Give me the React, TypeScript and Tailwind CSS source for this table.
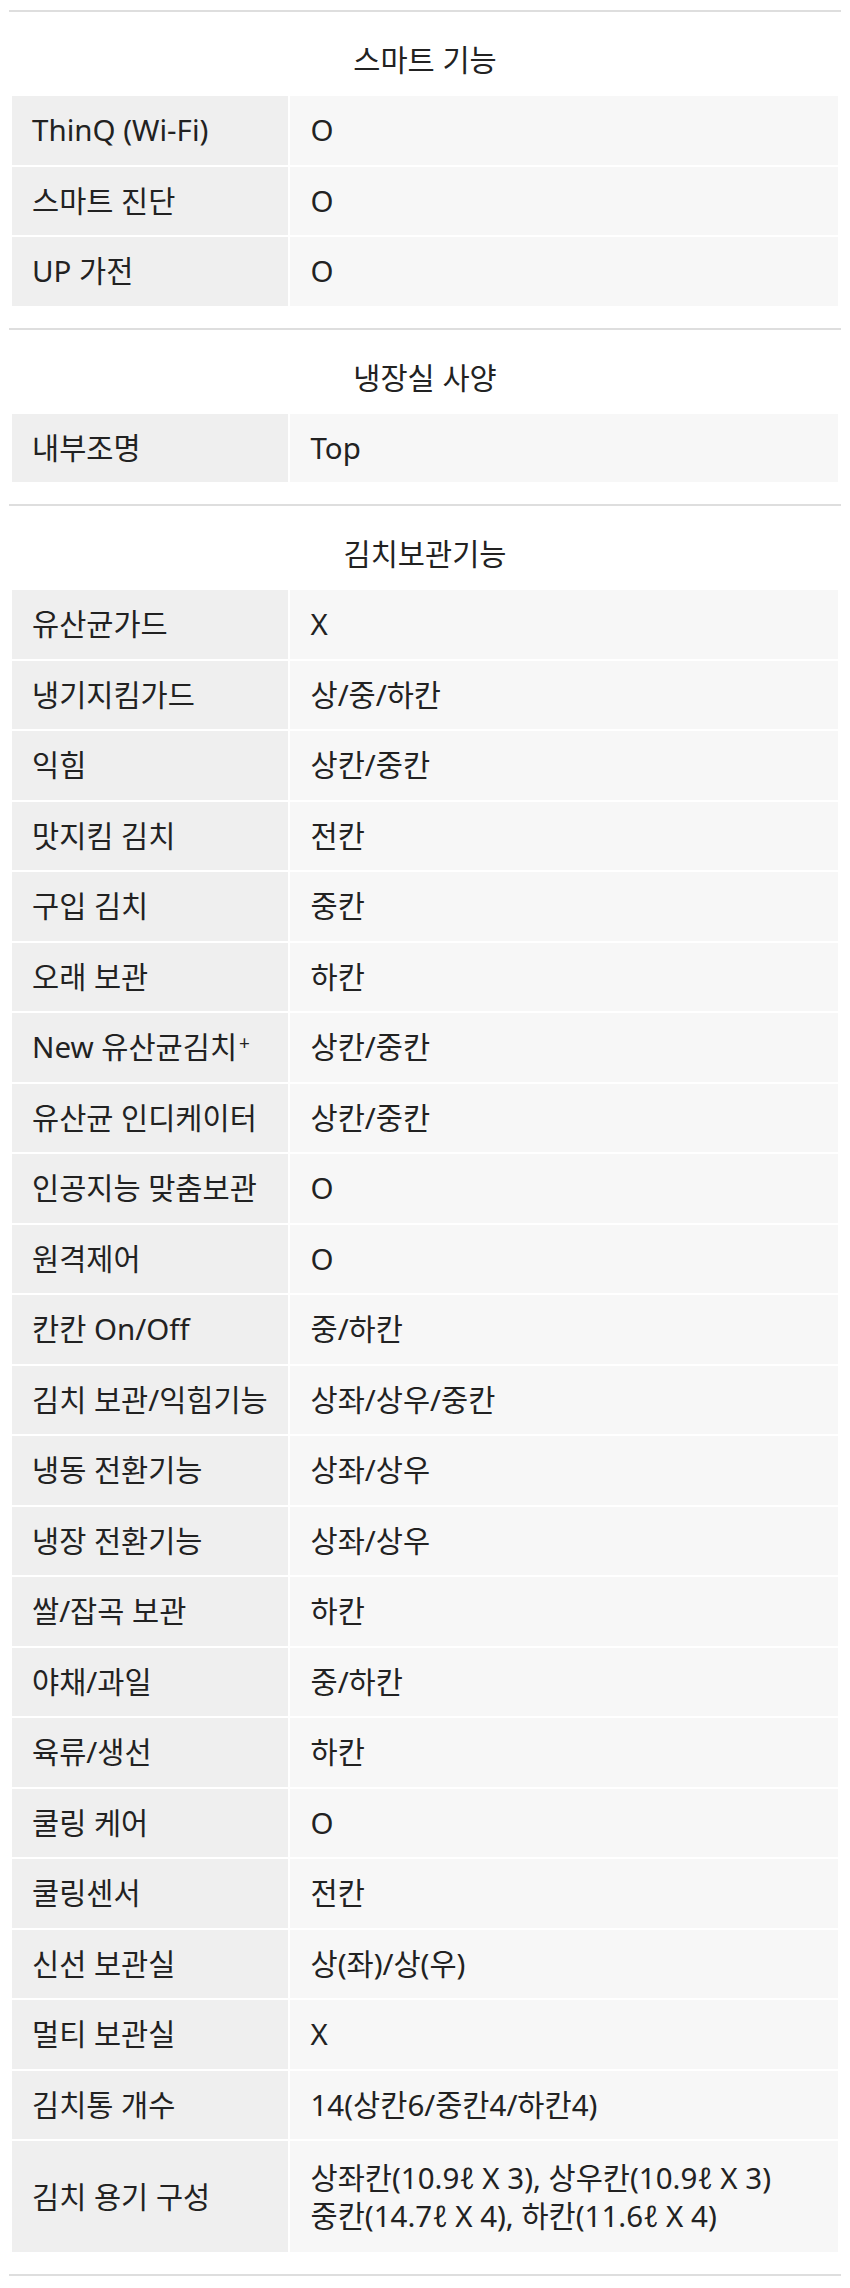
import React from "react";

type Row = { label: React.ReactNode; value: React.ReactNode; tall?: boolean };
type Section = { title: string; rows: Row[] };

const sections: Section[] = [
    {
        title: "스마트 기능",
        rows: [
            { label: "ThinQ (Wi-Fi)", value: "O" },
            { label: "스마트 진단", value: "O" },
            { label: "UP 가전", value: "O" },
        ],
    },
    {
        title: "냉장실 사양",
        rows: [{ label: "내부조명", value: "Top" }],
    },
    {
        title: "김치보관기능",
        rows: [
            { label: "유산균가드", value: "X" },
            { label: "냉기지킴가드", value: "상/중/하칸" },
            { label: "익힘", value: "상칸/중칸" },
            { label: "맛지킴 김치", value: "전칸" },
            { label: "구입 김치", value: "중칸" },
            { label: "오래 보관", value: "하칸" },
            {
                label: (
                    <>
                        New 유산균김치<sup className="text-[19px] relative -top-[4px] ml-[2px]">+</sup>
                    </>
                ),
                value: "상칸/중칸",
            },
            { label: "유산균 인디케이터", value: "상칸/중칸" },
            { label: "인공지능 맞춤보관", value: "O" },
            { label: "원격제어", value: "O" },
            { label: "칸칸 On/Off", value: "중/하칸" },
            { label: "김치 보관/익힘기능", value: "상좌/상우/중칸" },
            { label: "냉동 전환기능", value: "상좌/상우" },
            { label: "냉장 전환기능", value: "상좌/상우" },
            { label: "쌀/잡곡 보관", value: "하칸" },
            { label: "야채/과일", value: "중/하칸" },
            { label: "육류/생선", value: "하칸" },
            { label: "쿨링 케어", value: "O" },
            { label: "쿨링센서", value: "전칸" },
            { label: "신선 보관실", value: "상(좌)/상(우)" },
            { label: "멀티 보관실", value: "X" },
            { label: "김치통 개수", value: "14(상칸6/중칸4/하칸4)" },
            {
                label: "김치 용기 구성",
                value: (
                    <>
                        상좌칸(10.9ℓ X 3), 상우칸(10.9ℓ X 3)
                        <br />
                        중칸(14.7ℓ X 4), 하칸(11.6ℓ X 4)
                    </>
                ),
                tall: true,
            },
        ],
    },
];

function SpecRow({ row }: { row: Row }) {
    const h = row.tall ? "min-h-[111px]" : "min-h-[68.5px]";
    return (
        <div className="grid grid-cols-[275.5px_1fr] gap-[2px]">
            <div className={`${h} bg-[#efefef] flex items-center pl-[20px] pr-2 leading-[38px] whitespace-nowrap`}>{row.label}</div>
            <div className={`${h} bg-[#f7f7f7] flex items-center pl-[21px] pr-2 leading-[38px]`}>
                <div>{row.value}</div>
            </div>
        </div>
    );
}

export default function App() {
    return (
        <div
            className="bg-white min-h-[2288px] px-[9px] pt-[10px] text-[29.5px] text-[#222]"
            style={{ fontFamily: '"Noto Sans", "Noto Sans CJK KR", sans-serif' }}
        >
            {sections.map((s) => (
                <section key={s.title} className="border-t-2 border-[#dedede]">
                    {/* 섹션 제목 */}
                    <h2 className="pt-[28px] pb-[16px] text-center leading-[40px] text-[29.5px] font-normal">{s.title}</h2>
                    <div className="flex flex-col gap-[2px] px-[3px] pb-[22px]">
                        {s.rows.map((r, i) => (
                            <SpecRow key={i} row={r} />
                        ))}
                    </div>
                </section>
            ))}
            <div className="border-t-2 border-[#dedede]" />
        </div>
    );
}
